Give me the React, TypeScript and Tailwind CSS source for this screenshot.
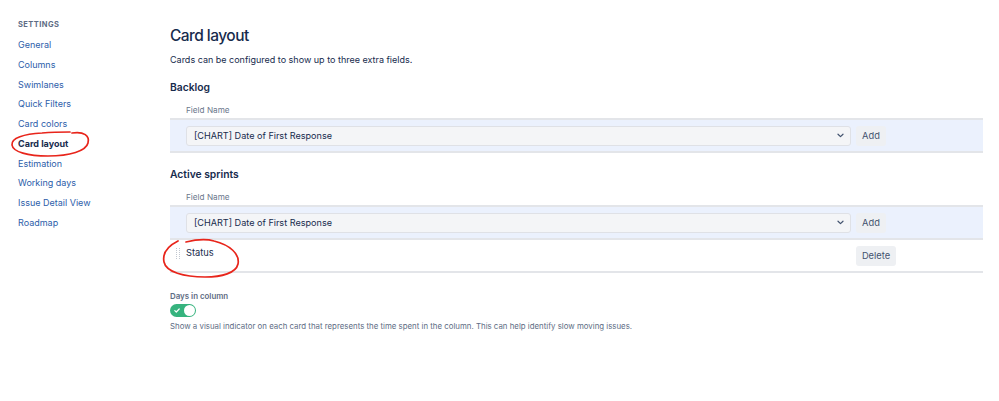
import React from "react";

const navItems = [
  "General",
  "Columns",
  "Swimlanes",
  "Quick Filters",
  "Card colors",
  "Card layout",
  "Estimation",
  "Working days",
  "Issue Detail View",
  "Roadmap",
];

function Chevron() {
  return (
    <svg width="7" height="5" viewBox="0 0 7 5" className="shrink-0">
      <path d="M1 1.2 L3.5 3.6 L6 1.2" fill="none" stroke="#42526e" strokeWidth="1.2" strokeLinecap="round" strokeLinejoin="round" />
    </svg>
  );
}

function FieldRow() {
  return (
    <div className="flex h-[35px] items-center border-y-2 border-[#e3e5e9] bg-[#ebf1fd] pl-[16px]">
      <div className="flex h-[20px] flex-1 items-center justify-between rounded-[3px] border border-[#dfe1e6] bg-[#f4f5f7] pl-[7px] pr-[6px] text-[9.1px] text-[#172b4d]">
        <span>[CHART] Date of First Response</span>
        <Chevron />
      </div>
      <div className="ml-[5px] w-[127px]">
        <div className="flex h-[20px] w-[30px] items-center justify-center rounded-[3px] bg-[#eef0f3] text-[9.3px] text-[#42526e]">
          Add
        </div>
      </div>
    </div>
  );
}

export default function App() {
  return (
    <div
      className="relative flex h-[401px] w-[999px] overflow-hidden bg-white text-[#172b4d]"
      style={{ fontFamily: "Inter, 'Liberation Sans', sans-serif" }}
    >
      {/* Sidebar */}
      <aside className="w-[170px] shrink-0 pl-[18px] pt-[15px]">
        <div className="flex h-[20px] items-center text-[7.5px] font-bold tracking-[0.06em] text-[#5e6c84]">
          SETTINGS
        </div>
        <ul className="flex flex-col">
          {navItems.map((item) => (
            <li
              key={item}
              className={
                "flex h-[19.75px] items-center text-[9px] " +
                (item === "Card layout" ? "font-bold text-[#172b4d]" : "text-[#2d60aa]")
              }
            >
              {item}
            </li>
          ))}
        </ul>
      </aside>

      {/* Main */}
      <main className="flex-1 pr-[16px] pt-[26px]">
        <h1 className="flex h-[20px] items-center text-[15.5px] font-medium tracking-[-0.035em] text-[#172b4d]">Card layout</h1>
        <p className="mt-[6px] flex h-[16px] items-center text-[9px] text-[#172b4d]">
          Cards can be configured to show up to three extra fields.
        </p>

        <h2 className="mt-[12px] flex h-[16px] items-center text-[10.3px] font-semibold">Backlog</h2>
        <div className="mt-[7px] flex h-[14px] items-center pl-[16px] text-[8.2px] text-[#6b778c]">Field Name</div>
        <div className="mt-[1px]">
          <FieldRow />
        </div>

        <h2 className="mt-[14px] flex h-[16px] items-center text-[10.3px] font-semibold">Active sprints</h2>
        <div className="mt-[7px] flex h-[14px] items-center pl-[16px] text-[8.2px] text-[#6b778c]">Field Name</div>
        <div className="mt-[1px]">
          <FieldRow />
        </div>
        <div className="flex h-[33px] items-center border-b-2 border-[#e3e5e9] pl-[6px]">
          <div className="mb-[4px] grid h-[12px] w-[4px] grid-cols-2 gap-[1px]">
            {Array.from({ length: 12 }).map((_, i) => (
              <span key={i} className="h-[1px] w-[1px] bg-[#c1c7d0]" />
            ))}
          </div>
          <span className="mb-[5px] ml-[6px] flex-1 text-[9.3px] text-[#172b4d]">Status</span>
          <div className="w-[127px]">
            <div className="flex h-[20px] w-[40px] items-center justify-center rounded-[3px] bg-[#eef0f3] text-[9.3px] text-[#42526e]">
              Delete
            </div>
          </div>
        </div>

        <div className="mt-[18px] flex h-[12px] items-center text-[7.9px] font-semibold text-[#5e6c84]">Days in column</div>
        <div className="mt-[1px] flex h-[13px] w-[26px] items-center justify-between rounded-full bg-[#36b37e] pl-[4px] pr-[1px]">
          <svg width="6" height="5" viewBox="0 0 6 5">
            <path d="M0.8 2.6 L2.3 4 L5.2 1" fill="none" stroke="white" strokeWidth="1.2" strokeLinecap="round" strokeLinejoin="round" />
          </svg>
          <span className="h-[11px] w-[11px] rounded-full bg-white" />
        </div>
        <p className="mt-[4px] flex h-[12px] items-center text-[7.85px] text-[#5e6c84]">
          Show a visual indicator on each card that represents the time spent in the column. This can help identify slow moving issues.
        </p>
      </main>

      {/* Red annotation marks */}
      <svg className="pointer-events-none absolute left-0 top-0" width="999" height="401" viewBox="0 0 999 401">
        <path
          d="M72 133 C84 131 90 136 88 143 C86 151 70 156 48 156 C28 156 13 152 12 145 C11 138 24 134 42 133 C54 132 64 132 70 132"
          fill="none"
          stroke="#e8251b"
          strokeWidth="1.7"
          strokeLinecap="round"
        />
        <path
          d="M186 242 C194 240 204 238 214 241 C230 245 240 254 238 264 C236 273 222 277 205 277 C184 277 166 272 164 262 C162 252 170 245 178 241"
          fill="none"
          stroke="#e8251b"
          strokeWidth="1.7"
          strokeLinecap="round"
        />
      </svg>
    </div>
  );
}
